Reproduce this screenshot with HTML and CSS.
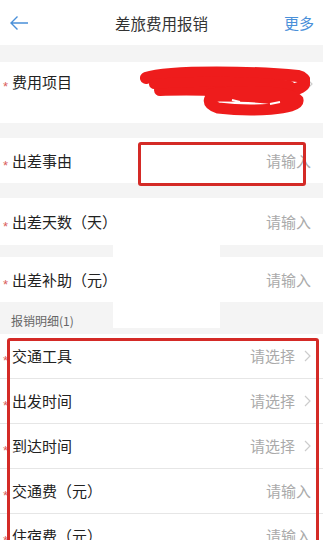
FILE: index.html
```html
<!DOCTYPE html>
<html lang="zh">
<head>
<meta charset="utf-8">
<link rel="stylesheet" href="styles.css">
</head>
<body>
<div class="page">
  <header class="nav">
    <svg class="back" width="20" height="16" viewBox="0 0 20 16"><path d="M19 8H2M8.5 1.5L2 8l6.5 6.5" fill="none" stroke="#4a90d9" stroke-width="1.4"/></svg>
    <div class="title">差旅费用报销</div>
    <div class="more">更多</div>
  </header>
  <div class="gap g1"></div>
  <div class="row tall">
    <span class="star">*</span><span class="label">费用项目</span>
    <span class="fill"></span>
    <svg class="chev" width="7" height="12" viewBox="0 0 7 12"><path d="M1 1l5 5-5 5" fill="none" stroke="#ccc" stroke-width="1.2"/></svg>
  </div>
  <div class="gap g2"></div>
  <div class="row">
    <span class="star">*</span><span class="label">出差事由</span>
    <span class="fill"></span><span class="ph">请输入</span>
  </div>
  <div class="gap g2"></div>
  <div class="row r47">
    <span class="star">*</span><span class="label">出差天数（天）</span>
    <span class="fill"></span><span class="ph">请输入</span>
  </div>
  <div class="gap g3"></div>
  <div class="row">
    <span class="star">*</span><span class="label">出差补助（元）</span>
    <span class="fill"></span><span class="ph">请输入</span>
  </div>
  <div class="section">报销明细(1)</div>
  <div class="list">
    <div class="row item">
      <span class="star">*</span><span class="label">交通工具</span>
      <span class="fill"></span><span class="ph sel">请选择</span>
      <svg class="chev" width="7" height="12" viewBox="0 0 7 12"><path d="M1 1l5 5-5 5" fill="none" stroke="#ccc" stroke-width="1.2"/></svg>
    </div>
    <div class="row item">
      <span class="star">*</span><span class="label">出发时间</span>
      <span class="fill"></span><span class="ph sel">请选择</span>
      <svg class="chev" width="7" height="12" viewBox="0 0 7 12"><path d="M1 1l5 5-5 5" fill="none" stroke="#ccc" stroke-width="1.2"/></svg>
    </div>
    <div class="row item">
      <span class="star">*</span><span class="label">到达时间</span>
      <span class="fill"></span><span class="ph sel">请选择</span>
      <svg class="chev" width="7" height="12" viewBox="0 0 7 12"><path d="M1 1l5 5-5 5" fill="none" stroke="#ccc" stroke-width="1.2"/></svg>
    </div>
    <div class="row item">
      <span class="star">*</span><span class="label">交通费（元）</span>
      <span class="fill"></span><span class="ph">请输入</span>
    </div>
    <div class="row item">
      <span class="star">*</span><span class="label">住宿费（元）</span>
      <span class="fill"></span><span class="ph">请输入</span>
    </div>
  </div>

  <svg class="scribble" width="170" height="52" viewBox="0 0 170 52">
    <path d="M6 12 C30 4, 120 6, 158 10 C168 12, 168 22, 150 24 C110 26, 60 22, 20 24" fill="none" stroke="#ee1c1c" stroke-width="12" stroke-linecap="round"/>
    <path d="M14 18 C60 14, 130 16, 150 20" fill="none" stroke="#ee1c1c" stroke-width="10" stroke-linecap="round"/>
    <path d="M70 28 C100 24, 150 24, 158 34 C160 44, 110 46, 78 42 C66 38, 66 30, 80 30 C110 30, 140 32, 150 38" fill="none" stroke="#ee1c1c" stroke-width="11" stroke-linecap="round"/>
    <path d="M92 34 l8 2 M130 38 l10 -2" stroke="#fff" stroke-width="2"/>
  </svg>
  <div class="mark box1"></div>
  <div class="mark box2"></div>
  <div class="patch"></div>
</div>
</body>
</html>
```
FILE: styles.css
```css
* { box-sizing: border-box; }
html, body { margin: 0; padding: 0; }
body {
  background: #f4f4f4;
  font-family: "Noto Sans CJK SC", "Liberation Sans", sans-serif;
  color: #222;
}
.page {
  position: relative;
  width: 323px;
  height: 540px;
  overflow: hidden;
  display: flex;
  flex-direction: column;
}
.nav {
  height: 45px;
  flex: none;
  background: #fff;
  display: flex;
  align-items: center;
  padding: 0 9px 0 9px;
  position: relative;
}
.back { display: block; }
.title {
  position: absolute;
  left: 0; right: 0;
  text-align: center;
  font-size: 15.5px;
  color: #333;
  pointer-events: none;
}
.more {
  margin-left: auto;
  font-size: 15px;
  color: #4a90d9;
}
.gap { flex: none; background: #f4f4f4; }
.g1 { height: 17px; }
.g2 { height: 15px; }
.g3 { height: 12px; }
.row {
  flex: none;
  height: 45px;
  background: #fff;
  display: flex;
  align-items: center;
  padding: 0 12px 0 3px;
}
.row.r47 { height: 47px; }
.row.tall {
  height: 61px;
  align-items: flex-start;
  padding-top: 9px;
}
.row.tall .chev { margin-top: 7px; margin-right: -2px; }
.star {
  width: 9px;
  height: 22px;
  font-family: "Liberation Sans", sans-serif;
  font-size: 13px;
  color: #d9605c;
  line-height: 1;
  padding-top: 9px;
}
.label { font-size: 15px; line-height: 22px; }
.fill { flex: 1; }
.ph { font-size: 15px; color: #aaa; line-height: 22px; }
.ph.sel { margin-right: 9px; }
.chev { display: block; flex: none; }
.item .chev { margin-right: 0; }
.section {
  flex: none;
  height: 32px;
  padding: 10px 0 0 11px;
  font-size: 12px;
  color: #666;
  background: #f4f4f4;
}
.list { flex: none; background: #fff; }
.item {
  height: 45px;
  border-bottom: 1px solid #e6e6e6;
  padding-right: 12px;
}
.scribble {
  position: absolute;
  left: 140px;
  top: 66px;
}
.mark {
  position: absolute;
  border: 3px solid #d42a26;
  border-radius: 3px;
}
.box1 { left: 138px; top: 142px; width: 168px; height: 44px; }
.box2 { left: 7px; top: 338px; width: 312px; height: 240px; }
.patch {
  position: absolute;
  left: 113px;
  top: 240px;
  width: 107px;
  height: 88px;
  background: #fff;
}
```
